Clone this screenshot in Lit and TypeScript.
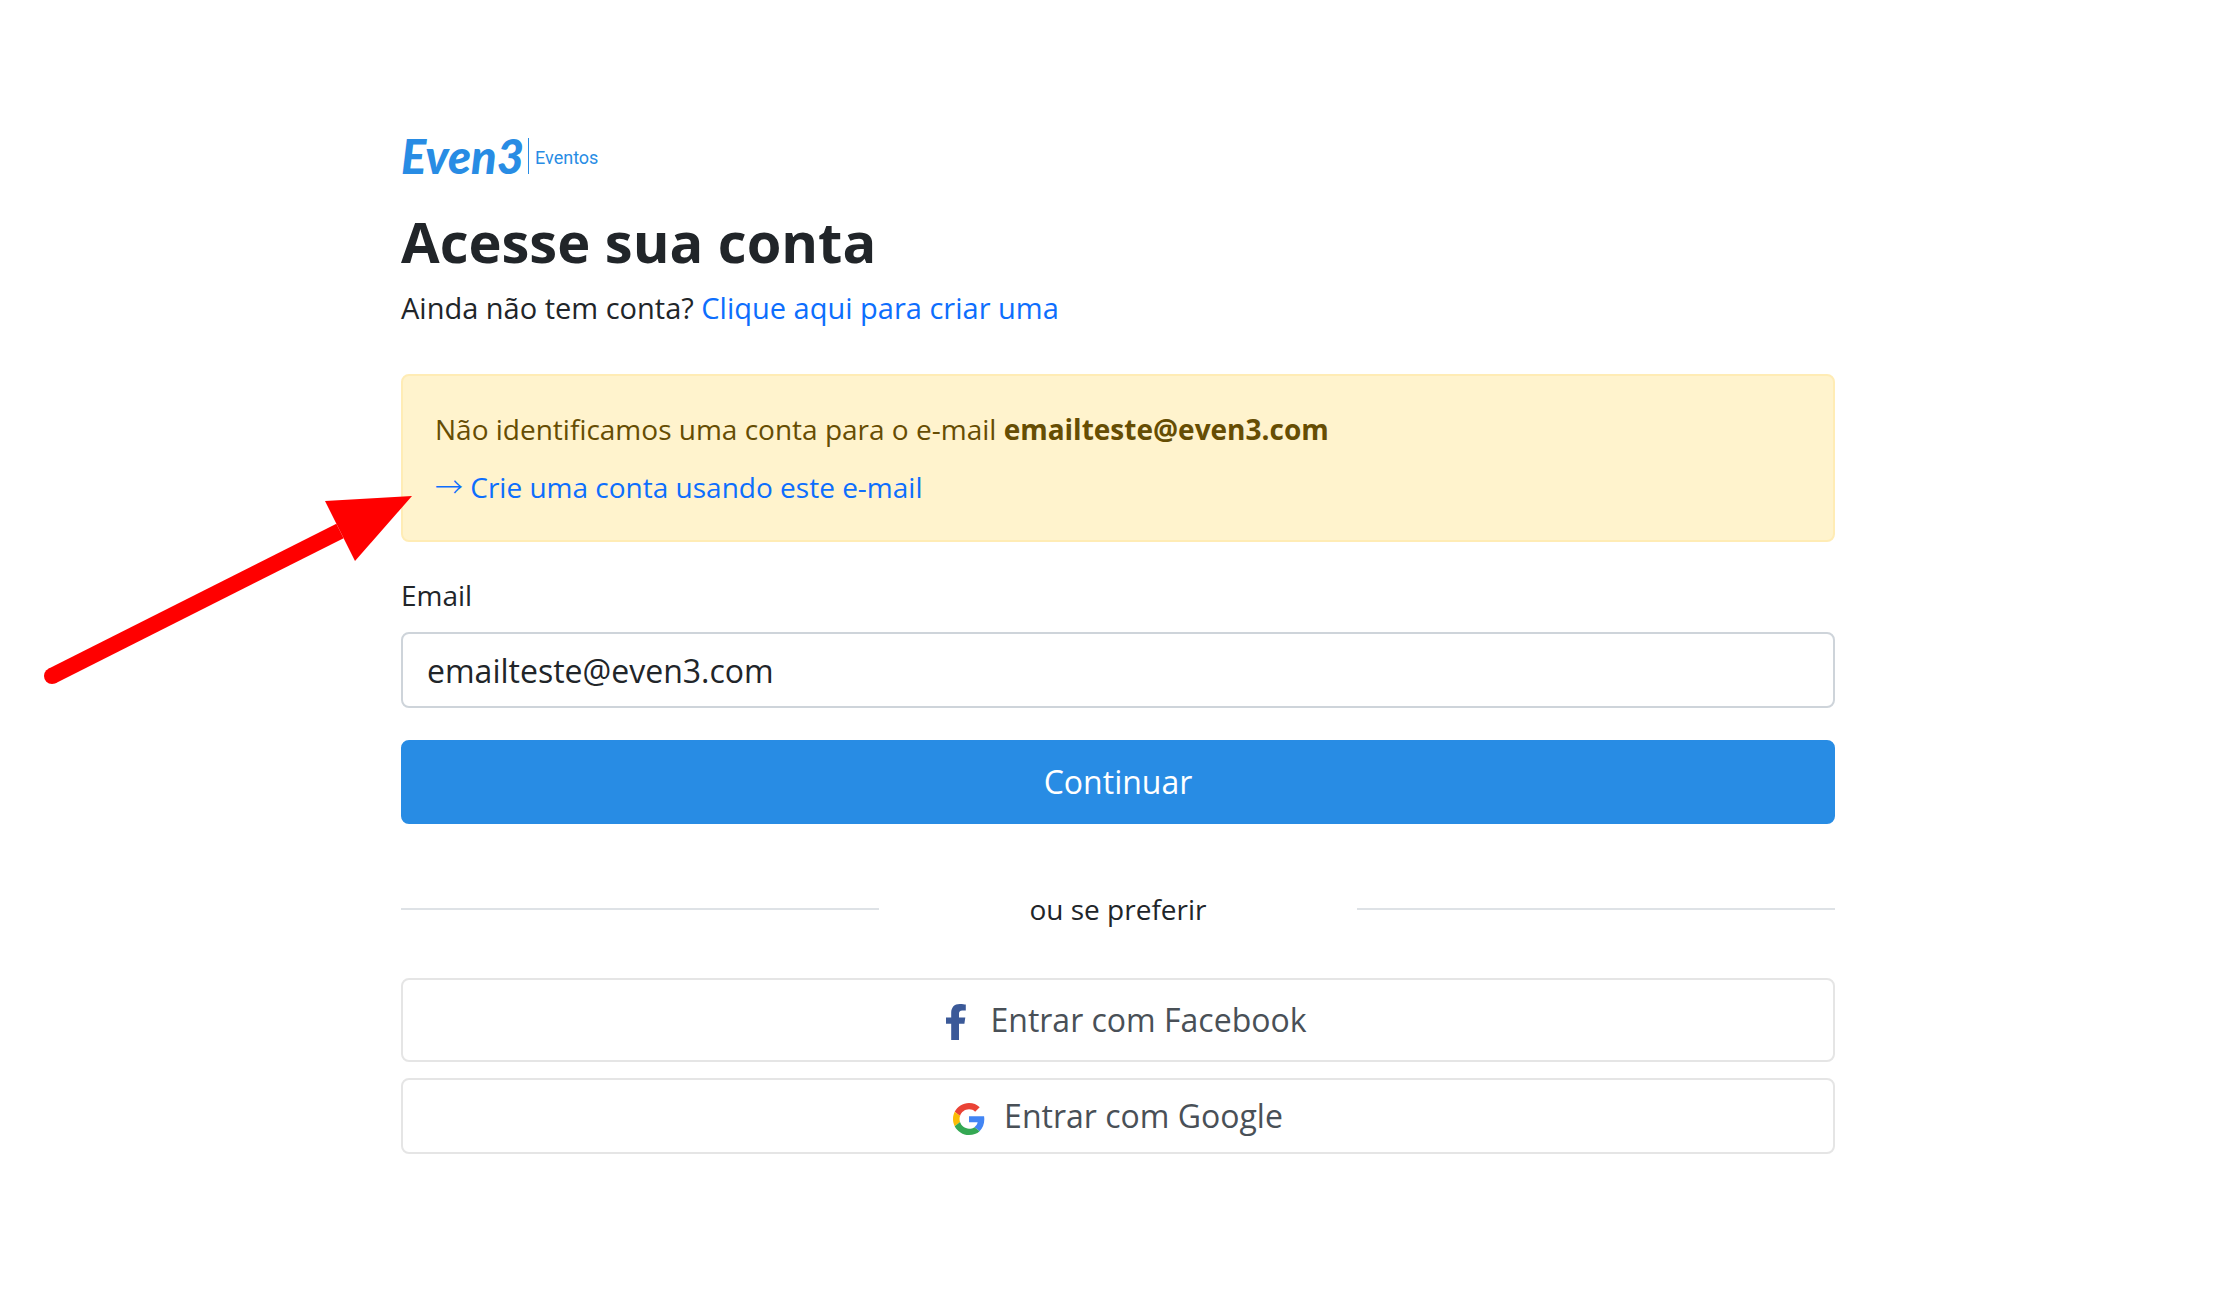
import { LitElement, html, css } from "lit";
import { customElement, state } from "lit/decorators.js";

@customElement("app-root")
export class AppRoot extends LitElement {
  static styles = css`
    :host {
      display: block;
      position: relative;
      min-height: 100vh;
      background: #fff;
      color: #212529;
      font-family: "Open Sans", "Liberation Sans", sans-serif;
      font-size: 28px;
      line-height: 42px;
    }
    *,
    *::before,
    *::after {
      box-sizing: border-box;
    }
    .page {
      display: flex;
      flex-direction: column;
      padding: 136px 391px 64px 401px;
    }
    .brand {
      display: flex;
      align-items: center;
      gap: 4px;
      height: 40px;
      margin-bottom: 31px;
      color: #288ce4;
      text-decoration: none;
    }
    .brand-name {
      font: italic 900 47px/40px Lato, sans-serif;
    }
    .brand-product {
      height: 36px;
      padding-left: 6px;
      border-left: 1px solid #288ce4;
      font: 400 18px/40px Roboto, sans-serif;
    }
    h1 {
      margin: 0 0 12px;
      font-size: 56px;
      font-weight: 700;
      line-height: 68px;
    }
    p {
      margin: 0;
    }
    .lead {
      font-size: 29px;
    }
    a {
      color: #0d6efd;
      text-decoration: none;
    }
    .alert {
      display: flex;
      flex-direction: column;
      gap: 16px;
      margin: 45px 0 32px;
      padding: 32px;
      border: 2px solid #ffecb5;
      border-radius: 8px;
      background: #fff3cd;
      color: #664d03;
    }
    .arrow {
      font-family: "Noto Sans CJK JP", sans-serif;
      font-weight: 300;
      line-height: 28px;
    }
    form {
      display: flex;
      flex-direction: column;
    }
    label {
      margin-bottom: 16px;
    }
    .field {
      width: 100%;
      margin: 0 0 32px;
      padding: 12px 24px;
      border: 2px solid #ced4da;
      border-radius: 8px;
      background: #fff;
      color: #212529;
      font: inherit;
      font-size: 32px;
      line-height: 48px;
      height: 76px;
    }
    .button {
      display: flex;
      align-items: center;
      justify-content: center;
      gap: 19px;
      width: 100%;
      margin: 0;
      padding: 16px 24px;
      border: 2px solid #e5e5e5;
      border-radius: 8px;
      background: #fff;
      color: #495057;
      font: inherit;
      font-size: 32px;
      line-height: 48px;
      cursor: pointer;
    }
    .primary {
      border-color: #288ce4;
      background: #288ce4;
      color: #fff;
    }
    .compact {
      padding: 12px 24px;
    }
    .divider {
      display: grid;
      grid-template-columns: repeat(3, 1fr);
      align-items: center;
      margin: 64px 0 48px;
      text-align: center;
    }
    .rule {
      height: 2px;
      background: #dee2e6;
    }
    .social {
      display: flex;
      flex-direction: column;
      gap: 16px;
    }
    .pointer {
      position: absolute;
      left: 40px;
      top: 490px;
      width: 380px;
      height: 200px;
      pointer-events: none;
    }
  `;

  @state() private email = "emailteste@even3.com";

  private onInput(e: Event) {
    this.email = (e.target as HTMLInputElement).value;
  }

  private onSubmit(e: Event) {
    e.preventDefault();
  }

  render() {
    return html`
      <main class="page">
        <a class="brand" href="#">
          <span class="brand-name">Even3</span>
          <span class="brand-product">Eventos</span>
        </a>
        <h1>Acesse sua conta</h1>
        <p class="lead">Ainda não tem conta? <a href="#criar">Clique aqui para criar uma</a></p>

        <div class="alert" role="alert">
          <p>Não identificamos uma conta para o e-mail <strong>emailteste@even3.com</strong></p>
          <p><a href="#criar-com-email"><span class="arrow">→</span> Crie uma conta usando este e-mail</a></p>
        </div>

        <form @submit=${this.onSubmit}>
          <label for="email">Email</label>
          <input class="field" id="email" type="email" .value=${this.email} @input=${this.onInput} />
          <button class="button primary" type="submit">Continuar</button>
        </form>

        <div class="divider">
          <span class="rule"></span>
          <span>ou se preferir</span>
          <span class="rule"></span>
        </div>

        <div class="social">
          <button class="button" type="button">
            <svg width="42" height="40" viewBox="1 0 42 40" aria-hidden="true">
              <path
                fill="#3b5998"
                d="M23.2 40V23.7H18V17.4h5.2v-4.6C23.2 7.4 26.3 4 31.8 4c2.500 0 5 .4 6 .6v5.800h-3.400c-2.700 0-3.400 1.500-3.400 3.300v3.700h6.300l-.9 6.300H31V40z"
              />
            </svg>
            <span>Entrar com Facebook</span>
          </button>
          <button class="button compact" type="button">
            <svg width="32" height="38" viewBox="0 -9 48 57" aria-hidden="true">
              <path fill="#ea4335" d="M24 9.500c3.540 0 6.710 1.220 9.210 3.600l6.850-6.850C35.900 2.380 30.470 0 24 0 14.620 0 6.510 5.380 2.560 13.220l7.980 6.190C12.430 13.720 17.740 9.500 24 9.500z" />
              <path fill="#4285f4" d="M46.980 24.550c0-1.570-.15-3.090-.38-4.550H24v9.020h12.940c-.58 2.960-2.260 5.480-4.780 7.180l7.730 6c4.510-4.180 7.090-10.360 7.090-17.650z" />
              <path fill="#fbbc05" d="M10.530 28.590c-.48-1.450-.76-2.990-.76-4.590s.27-3.140.76-4.590l-7.980-6.190C.92 16.460 0 20.120 0 24c0 3.880.92 7.540 2.560 10.780l7.970-6.190z" />
              <path fill="#34a853" d="M24 48c6.480 0 11.930-2.130 15.890-5.810l-7.730-6c-2.150 1.450-4.920 2.300-8.160 2.300-6.260 0-11.570-4.220-13.470-9.910l-7.980 6.190C6.510 42.620 14.620 48 24 48z" />
            </svg>
            <span>Entrar com Google</span>
          </button>
        </div>
      </main>

      <svg class="pointer" viewBox="40 490 380 200" aria-hidden="true">
        <line x1="52" y1="676" x2="340" y2="531" stroke="#f00" stroke-width="16" />
        <circle cx="52" cy="676" r="8" fill="#f00" />
        <polygon points="412,496 325,501 355,561" fill="#f00" />
      </svg>
    `;
  }
}
